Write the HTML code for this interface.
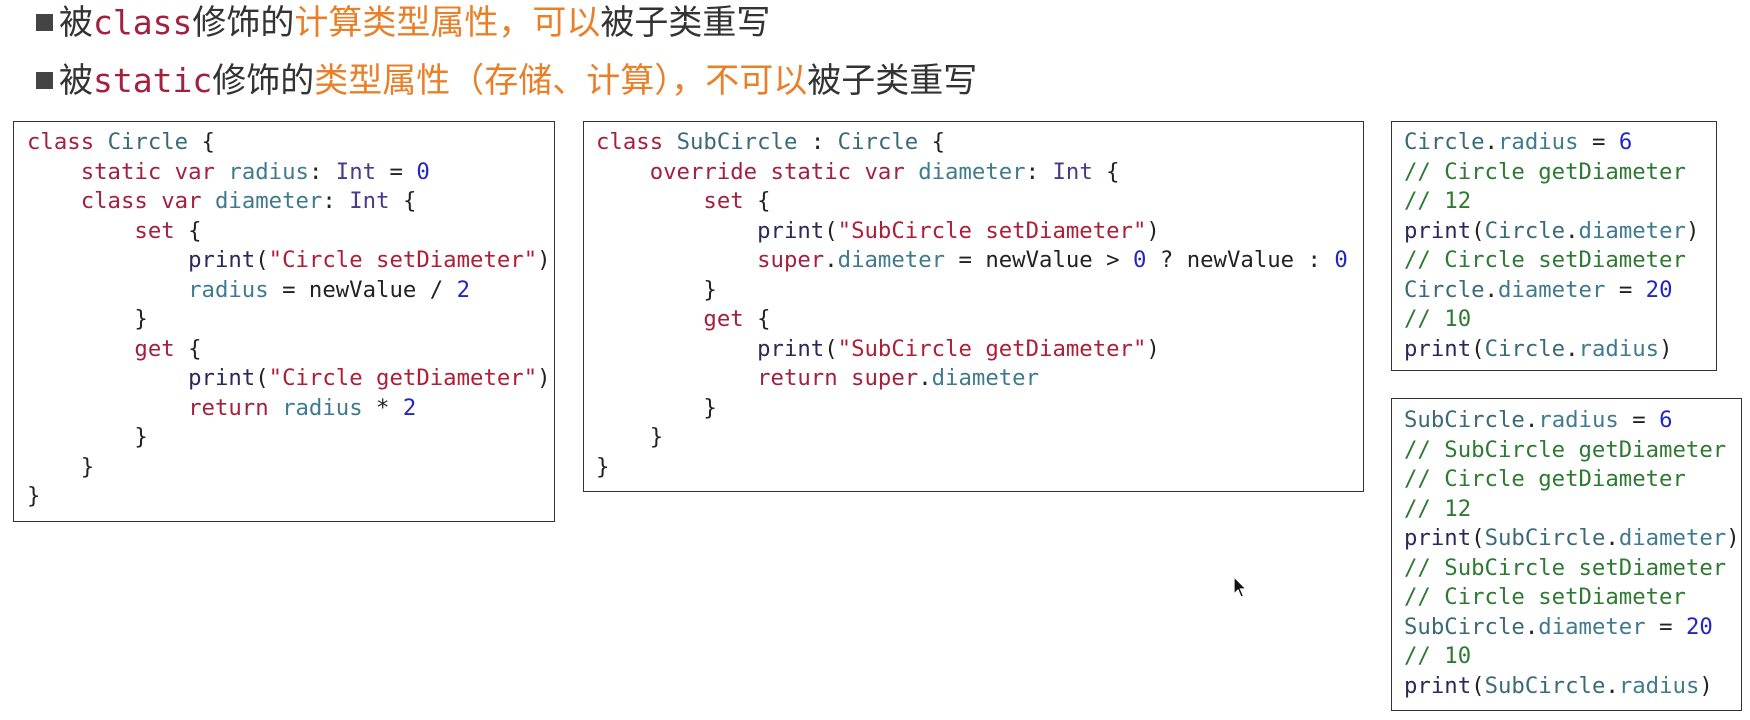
<!DOCTYPE html>
<html><head><meta charset="utf-8"><style>
body{margin:0;width:1750px;height:720px;background:#fff;position:relative;overflow:hidden;font-family:"Liberation Sans","Noto Sans CJK SC",sans-serif}
.h{position:absolute;left:36px;font-size:34px;color:#333;white-space:nowrap;line-height:40px}
.h .sq{display:inline-block;width:17px;height:17px;background:#444;margin-right:6px;vertical-align:3px}
.h .m{font-family:"DejaVu Sans Mono",monospace;color:#a3213f;font-size:33px}
.o{color:#e8802a}
.box{position:absolute;border:1.5px solid #333;box-sizing:border-box}
pre{margin:0;position:absolute;font-family:"DejaVu Sans Mono",monospace;font-size:22.3px;line-height:29.5px;color:#222}
.k{color:#a3213f}.t{color:#3a6a78}.i{color:#4b3a8a}.n{color:#2426c0}.s{color:#b01e35}.p{color:#3f7a8f}.c{color:#2e7a32}.f{color:#2a2a5a}
</style></head><body>
<div class="h" style="top:3px"><span class="sq"></span>被<span class="m">class</span>修饰的<span class="o">计算类型属性，可以</span>被子类重写</div>
<div class="h" style="top:61px"><span class="sq"></span>被<span class="m">static</span>修饰的<span class="o">类型属性（存储、计算），不可以</span>被子类重写</div>

<div class="box" style="left:13px;top:121px;width:542px;height:401px"></div>
<pre style="left:27px;top:128px"><span class="k">class</span> <span class="t">Circle</span> {
    <span class="k">static var</span> <span class="p">radius</span>: <span class="i">Int</span> = <span class="n">0</span>
    <span class="k">class var</span> <span class="p">diameter</span>: <span class="i">Int</span> {
        <span class="k">set</span> {
            <span class="f">print</span>(<span class="s">"Circle setDiameter"</span>)
            <span class="p">radius</span> = newValue / <span class="n">2</span>
        }
        <span class="k">get</span> {
            <span class="f">print</span>(<span class="s">"Circle getDiameter"</span>)
            <span class="k">return</span> <span class="p">radius</span> * <span class="n">2</span>
        }
    }
}</pre>

<div class="box" style="left:583px;top:121px;width:781px;height:371px"></div>
<pre style="left:596px;top:128px"><span class="k">class</span> <span class="t">SubCircle</span> : <span class="t">Circle</span> {
    <span class="k">override static var</span> <span class="p">diameter</span>: <span class="i">Int</span> {
        <span class="k">set</span> {
            <span class="f">print</span>(<span class="s">"SubCircle setDiameter"</span>)
            <span class="k">super</span>.<span class="p">diameter</span> = newValue &gt; <span class="n">0</span> ? newValue : <span class="n">0</span>
        }
        <span class="k">get</span> {
            <span class="f">print</span>(<span class="s">"SubCircle getDiameter"</span>)
            <span class="k">return super</span>.<span class="p">diameter</span>
        }
    }
}</pre>

<div class="box" style="left:1391px;top:121px;width:326px;height:250px"></div>
<pre style="left:1404px;top:128px"><span class="t">Circle</span>.<span class="p">radius</span> = <span class="n">6</span>
<span class="c">// Circle getDiameter</span>
<span class="c">// 12</span>
<span class="f">print</span>(<span class="t">Circle</span>.<span class="p">diameter</span>)
<span class="c">// Circle setDiameter</span>
<span class="t">Circle</span>.<span class="p">diameter</span> = <span class="n">20</span>
<span class="c">// 10</span>
<span class="f">print</span>(<span class="t">Circle</span>.<span class="p">radius</span>)</pre>

<div class="box" style="left:1391px;top:398px;width:351px;height:313px"></div>
<pre style="left:1404px;top:406px"><span class="t">SubCircle</span>.<span class="p">radius</span> = <span class="n">6</span>
<span class="c">// SubCircle getDiameter</span>
<span class="c">// Circle getDiameter</span>
<span class="c">// 12</span>
<span class="f">print</span>(<span class="t">SubCircle</span>.<span class="p">diameter</span>)
<span class="c">// SubCircle setDiameter</span>
<span class="c">// Circle setDiameter</span>
<span class="t">SubCircle</span>.<span class="p">diameter</span> = <span class="n">20</span>
<span class="c">// 10</span>
<span class="f">print</span>(<span class="t">SubCircle</span>.<span class="p">radius</span>)</pre>

<svg style="position:absolute;left:1233px;top:576px" width="16" height="24" viewBox="0 0 16 24"><path d="M1 1 L1 18 L5 14 L8 21 L10.5 20 L7.5 13 L13 13 Z" fill="#111" stroke="#fff" stroke-width="1.2"/></svg>
</body></html>
